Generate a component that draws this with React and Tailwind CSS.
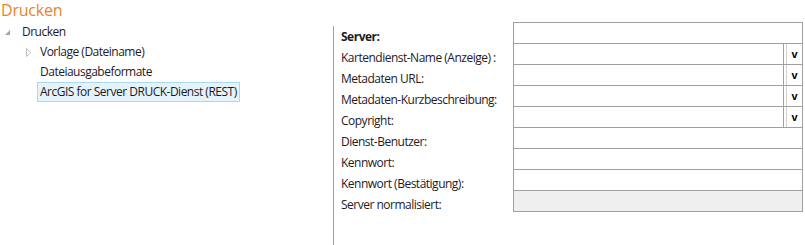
import React from 'react';

const fields = [
  { label: 'Server:', bold: true },
  { label: 'Kartendienst-Name (Anzeige) :', drop: true },
  { label: 'Metadaten URL:', drop: true },
  { label: 'Metadaten-Kurzbeschreibung:', drop: true },
  { label: 'Copyright:', drop: true },
  { label: 'Dienst-Benutzer:' },
  { label: 'Kennwort:' },
  { label: 'Kennwort (Bestätigung):' },
  { label: 'Server normalisiert:', disabled: true },
];

function Expanded() {
  return (
    <svg width="7" height="7" viewBox="0 0 7 7" className="shrink-0">
      <path d="M6 1 L6 6 L1 6 Z" fill="#a6a6a6" />
    </svg>
  );
}

function Collapsed() {
  return (
    <svg width="6" height="9" viewBox="0 0 6 9" className="shrink-0">
      <path d="M0.5 0.5 L5 4.5 L0.5 8.5 Z" fill="none" stroke="#bdbdbd" strokeWidth="1" />
    </svg>
  );
}

export default function App() {
  return (
    <div
      className="w-[805px] h-[245px] bg-white text-[#1e1a1f] overflow-hidden flex flex-col"
      style={{ fontFamily: '"Open Sans", "Noto Sans", sans-serif' }}
    >
      <div className="h-[22px] pl-[1px] text-[16px] leading-[20px] tracking-[-0.2px] text-[#e8832c]">Drucken</div>

      <div className="flex flex-1">
        {/* tree */}
        <div className="w-[333px] text-[12px] tracking-[-0.5px]">
          <div className="h-[20px] flex items-center pl-[4px] gap-[11px]">
            <Expanded />
            <span>Drucken</span>
          </div>
          <div className="h-[20px] flex items-center pl-[26px] gap-[8px]">
            <Collapsed />
            <span>Vorlage (Dateiname)</span>
          </div>
          <div className="h-[20px] flex items-center pl-[40px]">Dateiausgabeformate</div>
          <div className="h-[20px] flex items-center pl-[37px]">
            <div className="h-[20px] flex items-center px-[2px] bg-[#e5f3fb] border border-[#a9d8f2]">
              ArcGIS for Server DRUCK-Dienst (REST)
            </div>
          </div>
        </div>

        {/* form */}
        <div className="flex flex-1">
          <div className="w-px bg-[#a0a0a0] mt-[4px]" />
          <div className="w-[179px] pl-[7px] pt-[4px] text-[12px] tracking-[-0.5px]">
            {fields.map((f) => (
              <div key={f.label} className={`h-[21px] leading-[21px] whitespace-nowrap ${f.bold ? 'font-bold' : ''}`}>
                {f.label}
              </div>
            ))}
          </div>
          <div className="w-[290px] h-[190px] border-x border-b border-[#a0a0a0]">
            {fields.map((f) => (
              <div
                key={f.label}
                className={`h-[21px] border-t border-[#a0a0a0] flex ${f.disabled ? 'bg-[#efefef]' : 'bg-white'}`}
              >
                {f.drop && (
                  <>
                    <div className="flex-1 border-r border-[#a0a0a0]" />
                    <div className="w-[2px]" />
                    <div
                      className="w-[16px] border-l border-[#d0d0d0] flex items-center justify-center text-[11px] font-bold text-black"
                      style={{ fontFamily: '"Liberation Sans", Arial, sans-serif' }}
                    >
                      v
                    </div>
                  </>
                )}
              </div>
            ))}
          </div>
        </div>
      </div>
    </div>
  );
}
